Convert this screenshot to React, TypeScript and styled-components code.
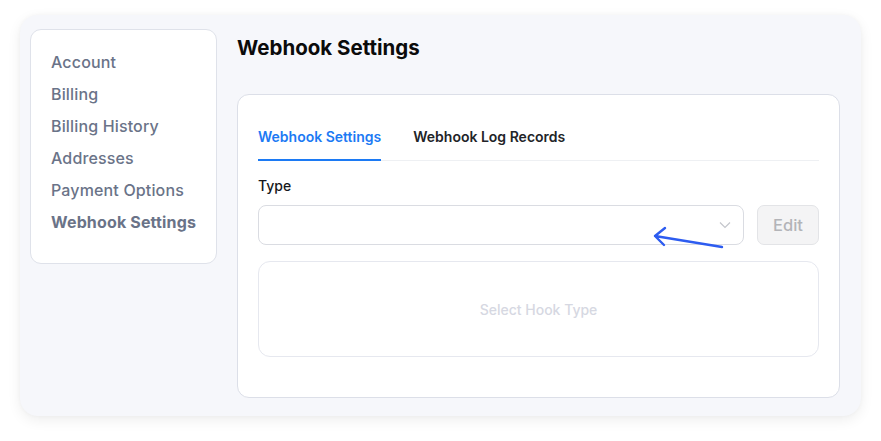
import React from "react";
import styled, { createGlobalStyle } from "styled-components";

const Global = createGlobalStyle`
  html, body { margin: 0; padding: 0; background: #ffffff; }
  body { font-family: Inter, "Noto Sans", Arial, sans-serif; -webkit-font-smoothing: antialiased; }
  * { box-sizing: border-box; }
`;

const Page = styled.div`
  padding: 15px 20px 25px 20px;
  width: 881px;
  height: 441px;
`;

const Shell = styled.div`
  position: relative;
  width: 841px;
  height: 401px;
  background: #f6f7fb;
  border-radius: 18px;
  box-shadow: 0 4px 14px rgba(0, 0, 0, 0.07), 0 0 4px rgba(0, 0, 0, 0.03);
  padding: 14px 21px 19px 10px;
  display: flex;
  gap: 20px;
  align-items: flex-start;
`;

const Sidebar = styled.nav`
  width: 187px;
  height: 235px;
  background: #ffffff;
  border: 1px solid #dfe2ea;
  border-radius: 11px;
  padding: 16px 0 0 20px;
  display: flex;
  flex-direction: column;
`;

const NavItem = styled.div<{ $active?: boolean }>`
  height: 32px;
  line-height: 32px;
  font-size: 16px;
  letter-spacing: 0.15px;
  font-weight: ${(p) => (p.$active ? 700 : 500)};
  color: #6a7388;
  white-space: nowrap;
`;

const Main = styled.div`
  flex: 1;
  display: flex;
  flex-direction: column;
  padding-top: 7px;
`;

const Title = styled.h1`
  margin: 0;
  font-size: 20.5px;
  line-height: 24px;
  font-weight: 700;
  color: #0b0b0b;
`;

const Card = styled.div`
  margin-top: 34px;
  height: 304px;
  background: #ffffff;
  border: 1px solid #dcdfe8;
  border-radius: 12px;
  padding: 32px 20px 0 20px;
  display: flex;
  flex-direction: column;
`;

const Tabs = styled.div`
  display: flex;
  gap: 32px;
  border-bottom: 1px solid #eef0f3;
`;

const Tab = styled.div<{ $active?: boolean }>`
  font-size: 14px;
  line-height: 20px;
  font-weight: 600;
  padding-bottom: 12px;
  margin-bottom: -1px;
  color: ${(p) => (p.$active ? "#1c7af4" : "#222428")};
  border-bottom: 2px solid ${(p) => (p.$active ? "#1c7af4" : "transparent")};
`;

const Label = styled.div`
  margin-top: 15px;
  font-size: 14px;
  line-height: 20px;
  font-weight: 500;
  color: #16181c;
`;

const FieldRow = styled.div`
  margin-top: 9px;
  display: flex;
  gap: 13px;
`;

const Select = styled.div`
  flex: 1;
  height: 40px;
  border: 1px solid #dadce2;
  border-radius: 8px;
  background: #ffffff;
  display: flex;
  align-items: center;
  justify-content: flex-end;
  padding-right: 12px;
`;

const EditButton = styled.button`
  width: 62px;
  height: 40px;
  border: 1px solid #e3e4e7;
  border-radius: 7px;
  background: #f4f4f5;
  color: #b3b4b8;
  font-family: inherit;
  font-size: 16.5px;
  font-weight: 500;
  padding: 0;
`;

const EmptyBox = styled.div`
  margin-top: 16px;
  height: 96px;
  border: 1px solid #e6e8ef;
  border-radius: 12px;
  display: flex;
  align-items: center;
  justify-content: center;
  font-size: 14px;
  font-weight: 500;
  color: #d6d8e2;
`;

const Arrow = styled.svg`
  position: absolute;
  left: 630px;
  top: 210px;
  overflow: visible;
`;

export default function App() {
  const items = ["Account", "Billing", "Billing History", "Addresses", "Payment Options", "Webhook Settings"];
  return (
    <>
      <Global />
      <Page>
        <Shell>
          <Sidebar>
            {items.map((it, i) => (
              <NavItem key={it} $active={i === items.length - 1}>
                {it}
              </NavItem>
            ))}
          </Sidebar>
          <Main>
            <Title>Webhook Settings</Title>
            <Card>
              <Tabs>
                <Tab $active>Webhook Settings</Tab>
                <Tab>Webhook Log Records</Tab>
              </Tabs>
              <Label>Type</Label>
              <FieldRow>
                <Select>
                  <svg width="12" height="8" viewBox="0 0 12 8">
                    <path d="M1 1.5 L6 6.5 L11 1.5" fill="none" stroke="#c4c6cc" strokeWidth="1.2" />
                  </svg>
                </Select>
                <EditButton>Edit</EditButton>
              </FieldRow>
              <EmptyBox>Select Hook Type</EmptyBox>
            </Card>
          </Main>
          <Arrow width="80" height="40" viewBox="0 0 80 40">
            <path
              d="M72 22 L5 11 M15 3 L5 11 L14 20"
              fill="none"
              stroke="#2d5cf0"
              strokeWidth="2.4"
              strokeLinecap="round"
              strokeLinejoin="round"
            />
          </Arrow>
        </Shell>
      </Page>
    </>
  );
}
